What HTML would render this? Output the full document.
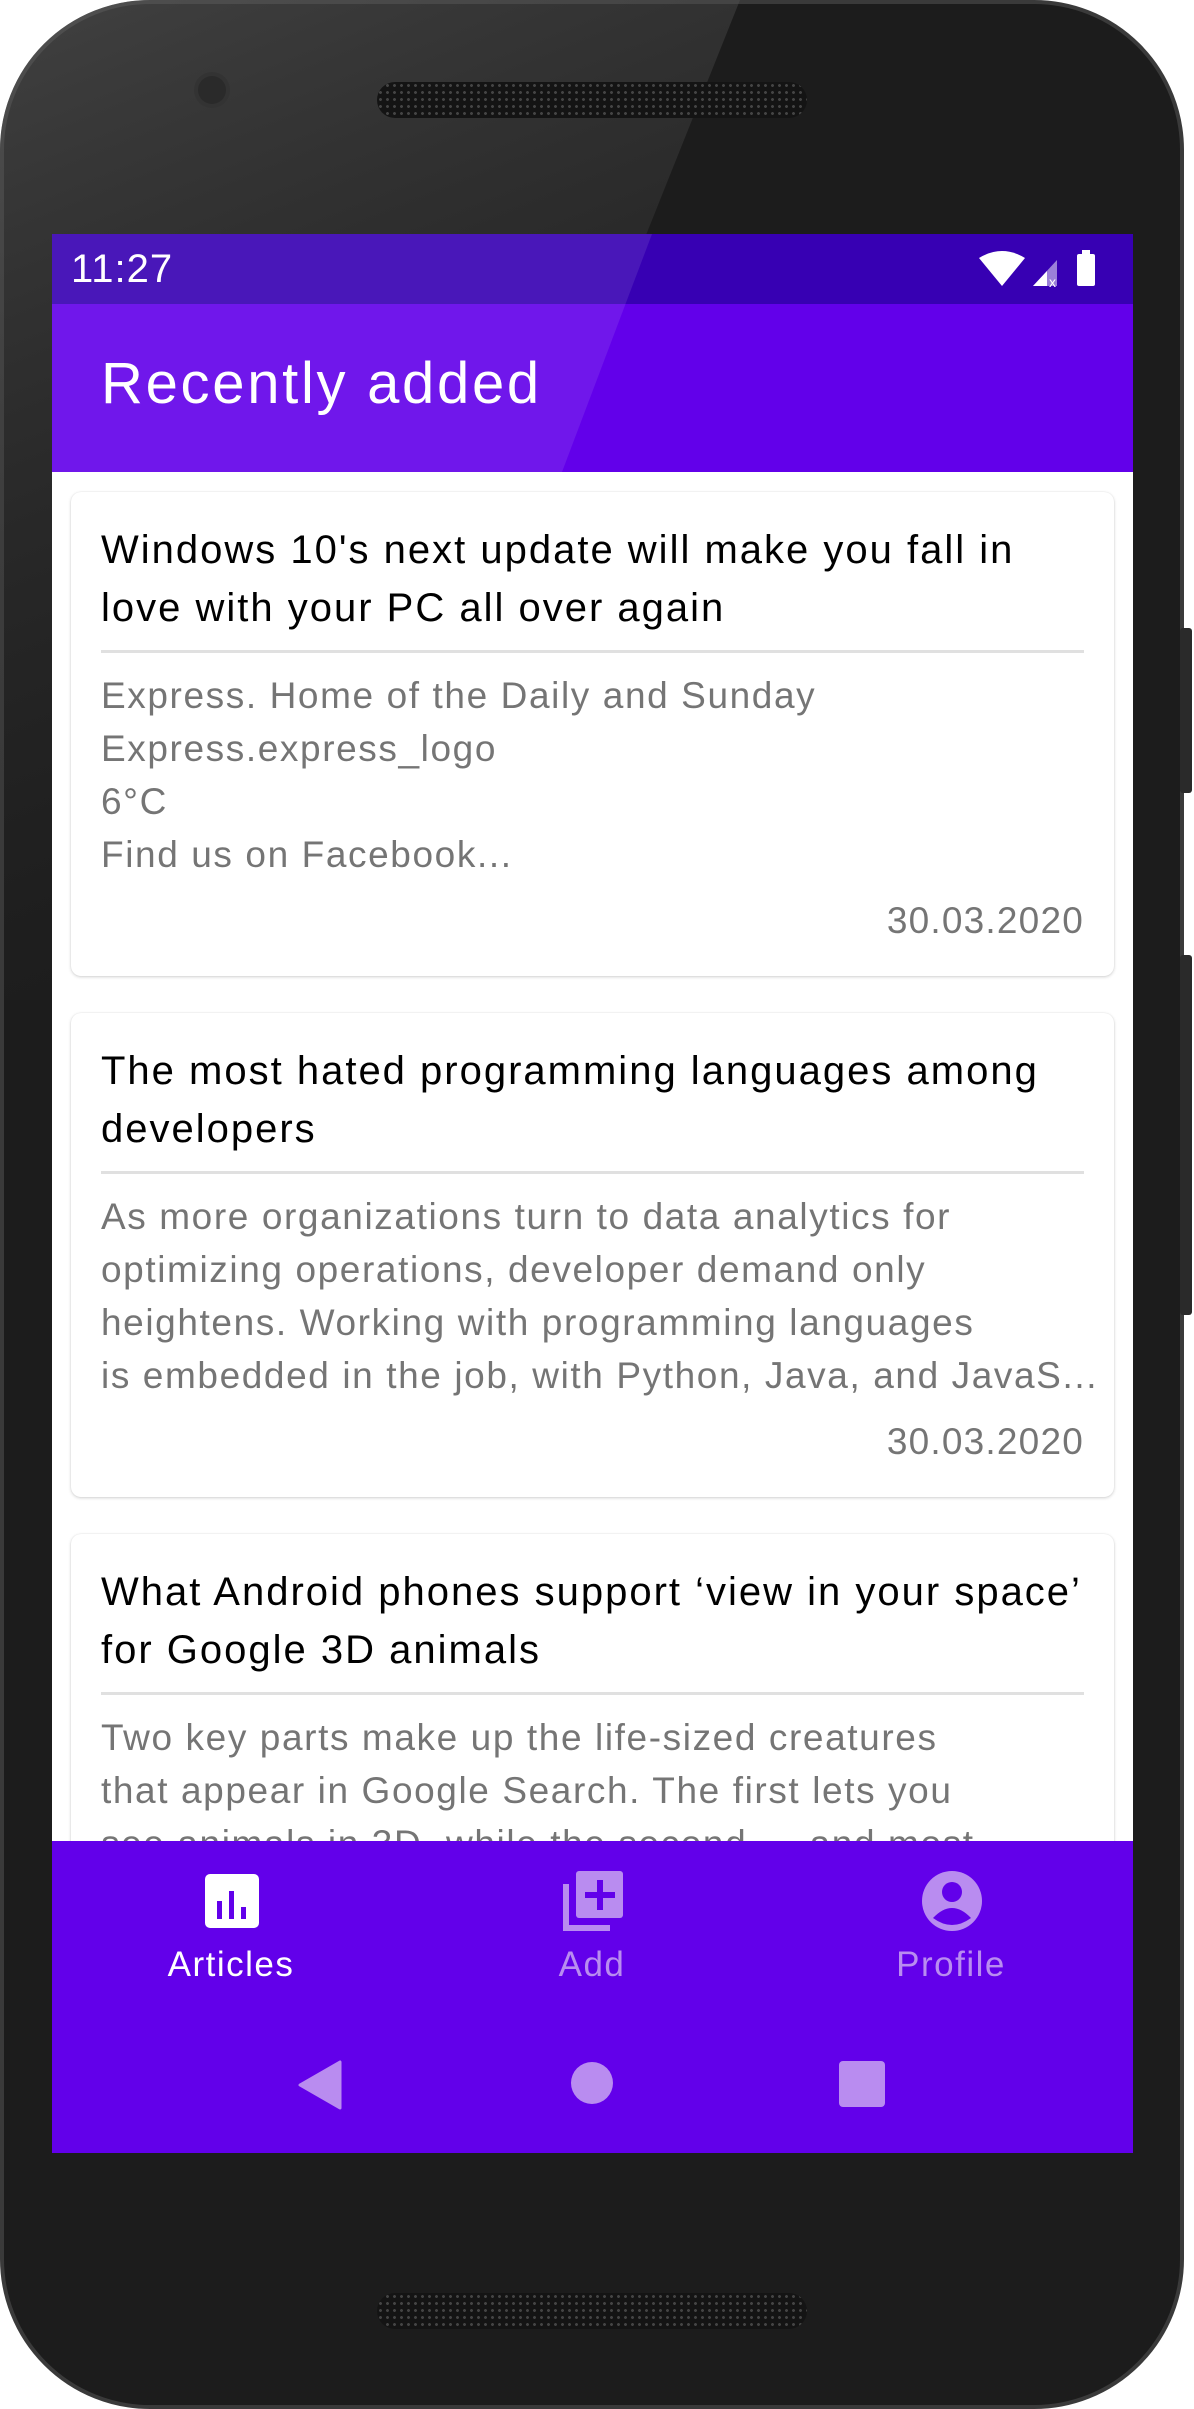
<!DOCTYPE html>
<html><head><meta charset="utf-8"><style>
*{margin:0;padding:0;box-sizing:border-box}
html,body{width:1194px;height:2409px;background:#fff;overflow:hidden;font-family:"Liberation Sans",sans-serif}
.phone{position:absolute;left:0;top:0;width:1184px;height:2409px;border-radius:150px;background:#1c1c1c;border:4px solid #3a3a3a}
.glare{position:absolute;left:0;top:0;width:1184px;height:2409px;border-radius:150px;overflow:hidden}
.btn{position:absolute;left:1180px;background:#2a2a2a;width:12px;border-radius:3px}
.screen{position:absolute;left:52px;top:234px;width:1081px;height:1919px;background:#fff;overflow:hidden}
.status{position:absolute;left:0;top:0;width:100%;height:70px;background:#3700b3}
.appbar{position:absolute;left:0;top:70px;width:100%;height:168px;background:#6200ea}
.abs{position:absolute;white-space:nowrap}
.card{position:absolute;left:19px;width:1043px;height:484px;background:#fff;border-radius:10px;box-shadow:0 1px 3px rgba(0,0,0,.18),0 0 1px rgba(0,0,0,.12)}
.t{position:absolute;left:30px;font-size:40px;letter-spacing:2px;color:#000;line-height:58px;white-space:nowrap}
.d{position:absolute;left:30px;width:983px;height:3px;background:#e0e0e0}
.b{position:absolute;left:30px;font-size:37px;letter-spacing:1.6px;color:#757575;line-height:53px;white-space:nowrap}
.dt{position:absolute;right:30px;font-size:37px;letter-spacing:1.2px;color:#757575;white-space:nowrap}
.nav{position:absolute;left:0;top:1607px;width:100%;height:312px;background:#6200ea}
.lbl{position:absolute;font-size:35px;letter-spacing:1.5px;transform:translateX(-50%);white-space:nowrap}
</style></head><body>
<div class="phone"></div>
<div class="glare"><svg width="1184" height="2409" style="position:absolute;left:0;top:0"><defs><linearGradient id="g" x1="0" y1="0" x2="0.3" y2="1"><stop offset="0" stop-color="#666" stop-opacity=".5"/><stop offset="0.5" stop-color="#444" stop-opacity=".3"/><stop offset="1" stop-color="#333" stop-opacity="0"/></linearGradient></defs><polygon points="0,0 740,0 340,1000 0,1000" fill="url(#g)"/></svg></div>
<div class="btn" style="top:628px;height:165px"></div>
<div class="btn" style="top:955px;height:360px"></div>
<div class="abs" style="left:198px;top:76px;width:28px;height:28px;border-radius:50%;background:#2a2a2a;box-shadow:0 0 0 4px #333"></div>
<div class="abs" style="left:377px;top:82px;width:430px;height:36px;border-radius:18px;background:#141414;background-image:radial-gradient(#444 1.3px,transparent 1.6px);background-size:7px 7px"></div>
<div class="abs" style="left:377px;top:2293px;width:430px;height:36px;border-radius:18px;background:#141414;background-image:radial-gradient(#444 1.3px,transparent 1.6px);background-size:7px 7px"></div>
<div class="screen">
 <div class="status"></div>
 <div class="appbar"></div>
 <svg width="1081" height="238" style="position:absolute;left:0;top:0"><polygon points="0,0 600,0 510,238 0,238" fill="#fff" opacity=".09"/></svg>
 <div class="abs" style="left:19px;top:13px;font-size:40px;letter-spacing:1px;color:#fff">11:27</div>
 <svg class="abs" style="left:925px;top:16px" width="130" height="40" viewBox="0 0 130 40">
  <path d="M2 8 Q25 -6 48 8 L25 36 Z" fill="#fff"/>
  <path d="M56 36 L80 10 L80 36 Z" fill="#fff" opacity=".5"/><path d="M56 36 L70 21 L70 36Z" fill="#fff"/>
  <text x="72" y="37" font-size="14" fill="#fff" font-family="Liberation Sans">x</text>
  <rect x="100" y="4" width="18" height="32" rx="2" fill="#fff"/><rect x="105" y="0" width="8" height="5" fill="#fff"/>
 </svg>
 <div class="abs" style="left:49px;top:116px;font-size:58px;letter-spacing:2.7px;color:#fff">Recently added</div>

 <div class="card" style="top:258px">
  <div class="t" style="top:29px">Windows 10's next update will make you fall in</div>
  <div class="t" style="top:87px">love with your PC all over again</div>
  <div class="d" style="top:158px"></div>
  <div class="b" style="top:177px">Express. Home of the Daily and Sunday</div>
  <div class="b" style="top:230px">Express.express_logo</div>
  <div class="b" style="top:283px">6°C</div>
  <div class="b" style="top:336px">Find us on Facebook...</div>
  <div class="dt" style="top:408px">30.03.2020</div>
 </div>
 <div class="card" style="top:779px">
  <div class="t" style="top:29px">The most hated programming languages among</div>
  <div class="t" style="top:87px">developers</div>
  <div class="d" style="top:158px"></div>
  <div class="b" style="top:177px">As more organizations turn to data analytics for</div>
  <div class="b" style="top:230px">optimizing operations, developer demand only</div>
  <div class="b" style="top:283px">heightens. Working with programming languages</div>
  <div class="b" style="top:336px">is embedded in the job, with Python, Java, and JavaS...</div>
  <div class="dt" style="top:408px">30.03.2020</div>
 </div>
 <div class="card" style="top:1300px">
  <div class="t" style="top:29px">What Android phones support ‘view in your space’</div>
  <div class="t" style="top:87px">for Google 3D animals</div>
  <div class="d" style="top:158px"></div>
  <div class="b" style="top:177px">Two key parts make up the life-sized creatures</div>
  <div class="b" style="top:230px">that appear in Google Search. The first lets you</div>
  <div class="b" style="top:283px">see animals in 3D, while the second — and most</div>
 </div>

 <div class="nav">
  <svg class="abs" style="left:152px;top:32px" width="56" height="56" viewBox="0 0 56 56"><rect x="1" y="1" width="54" height="54" rx="5" fill="#fff"/><rect x="13" y="28" width="5" height="18" fill="#6200ea"/><rect x="25" y="18" width="5" height="28" fill="#6200ea"/><rect x="37" y="34" width="5" height="12" fill="#6200ea"/></svg>
  <div class="lbl" style="left:179px;top:104px;color:#fff">Articles</div>
  <svg class="abs" style="left:510px;top:29px" width="62" height="62" viewBox="0 0 62 62"><path d="M1 14 V61 H48 V55 H7 V14Z" fill="#b98cf0"/><rect x="14" y="1" width="47" height="47" rx="3" fill="#b98cf0"/><rect x="35" y="10" width="6" height="30" fill="#6200ea"/><rect x="23" y="22" width="30" height="6" fill="#6200ea"/></svg>
  <div class="lbl" style="left:540px;top:104px;color:#b98cf0">Add</div>
  <svg class="abs" style="left:869px;top:29px" width="62" height="62" viewBox="0 0 62 62"><circle cx="31" cy="31" r="30" fill="#b98cf0"/><circle cx="31" cy="22" r="10" fill="#6200ea"/><path d="M12 48 Q31 28 50 48 Q31 62 12 48Z" fill="#6200ea"/></svg>
  <div class="lbl" style="left:899px;top:104px;color:#b98cf0">Profile</div>
  <svg class="abs" style="left:246px;top:219px" width="44" height="50"><path d="M42 2 V48 L2 25 Z" fill="#b98cf0" stroke="#b98cf0" stroke-width="3" stroke-linejoin="round"/></svg>
  <div class="abs" style="left:519px;top:221px;width:42px;height:42px;border-radius:50%;background:#b98cf0"></div>
  <div class="abs" style="left:787px;top:220px;width:46px;height:46px;border-radius:4px;background:#b98cf0"></div>
 </div>
</div>
</body></html>
